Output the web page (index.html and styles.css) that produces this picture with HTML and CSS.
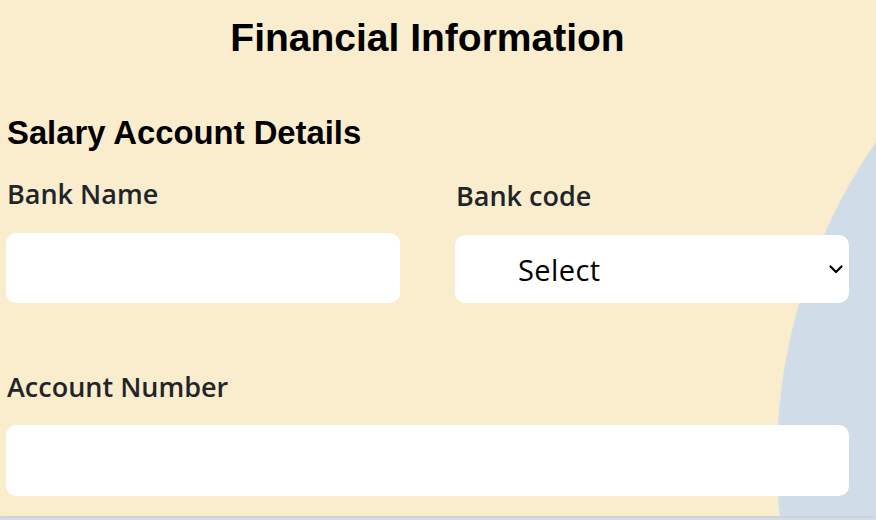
FILE: index.html
```html
<!DOCTYPE html>
<html lang="en">
<head>
<meta charset="utf-8">
<title>Financial Information</title>
<link rel="stylesheet" href="styles.css">
</head>
<body>
<section class="page">
  <div class="content">
    <h1 class="title">Financial Information</h1>
    <h2 class="subtitle">Salary Account Details</h2>
    <div class="row">
      <div class="field">
        <label class="label" for="bank-name">Bank Name</label>
        <input class="input" id="bank-name" type="text">
      </div>
      <div class="field field-offset">
        <label class="label" for="bank-code">Bank code</label>
        <div class="select-wrap">
          <select class="select" id="bank-code">
            <option>Select</option>
          </select>
          <svg class="chevron" width="14" height="9" viewBox="0 0 14 9" aria-hidden="true">
            <path d="M1.5 1.5 L7 7 L12.5 1.5" fill="none" stroke="#000" stroke-width="2.2" stroke-linecap="round" stroke-linejoin="round"/>
          </svg>
        </div>
      </div>
    </div>
    <div class="field field-wide">
      <label class="label" for="account-number">Account Number</label>
      <input class="input input-tall" id="account-number" type="text">
    </div>
  </div>
</section>
</body>
</html>
```
FILE: styles.css
```css
html, body {
  margin: 0;
  padding: 0;
}

body {
  background: #d6dde4;
  height: 520px;
  overflow: hidden;
}

.page {
  height: 516px;
  background-color: #faedcd;
  background-image: radial-gradient(circle 560px at 1336px 460px, #d0dce7 99.7%, rgba(208, 220, 231, 0) 100%);
  box-shadow: 0 1px 3px rgba(0, 0, 0, 0.08);
  overflow: hidden;
}

.content {
  width: 843px;
  padding-left: 6px;
  display: flex;
  flex-direction: column;
}

.title {
  margin: 15px 0 0;
  font-family: "Liberation Sans", Arial, sans-serif;
  font-weight: 700;
  font-size: 39px;
  line-height: 45px;
  text-align: center;
  color: #000;
}

.subtitle {
  margin: 54px 0 0 1px;
  font-family: "Liberation Sans", Arial, sans-serif;
  font-weight: 700;
  font-size: 32.8px;
  line-height: 37px;
  color: #000;
}

.row {
  margin-top: 25px;
  display: grid;
  grid-template-columns: 1fr 1fr;
  column-gap: 55px;
}

.field {
  display: flex;
  flex-direction: column;
}

.field-offset {
  padding-top: 2px;
}

.field-wide {
  margin-top: 66px;
}

.label {
  font-family: "Open Sans", "Noto Sans", sans-serif;
  font-weight: 600;
  font-size: 27px;
  line-height: 36px;
  color: #212529;
  margin: 0 0 21px 1px;
}

.field-wide .label {
  margin-bottom: 20px;
}

.input {
  display: block;
  box-sizing: border-box;
  width: 100%;
  height: 70px;
  border: none;
  border-radius: 10px;
  background: #fff;
  margin: 0;
  padding: 0 16px;
  font-family: "Open Sans", sans-serif;
  font-size: 24px;
  outline: none;
}

.input-tall {
  height: 71px;
}

.select-wrap {
  position: relative;
}

.select {
  display: block;
  box-sizing: border-box;
  width: 100%;
  height: 68px;
  border: none;
  border-radius: 10px;
  background: #fff;
  margin: 0;
  padding: 0 0 0 63px;
  -webkit-appearance: none;
  appearance: none;
  font-family: "Open Sans", "Noto Sans", sans-serif;
  font-size: 29px;
  letter-spacing: 0.4px;
  color: #000;
  outline: none;
}

.chevron {
  position: absolute;
  right: 6px;
  top: 30px;
  pointer-events: none;
}
```
